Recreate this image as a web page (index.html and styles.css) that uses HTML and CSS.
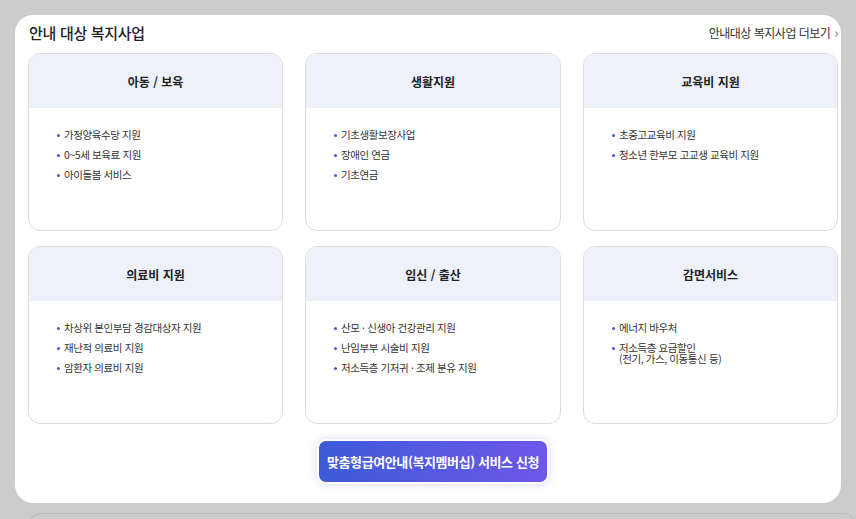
FILE: index.html
```html
<!DOCTYPE html>
<html lang="ko">
<head>
    <meta charset="UTF-8">
    <title>안내 대상 복지사업</title>
    <link rel="stylesheet" href="styles.css">
</head>
<body>

    <div class="panel">
        <div class="panel-head">
            <h2>안내 대상 복지사업</h2>
            <a class="more" href="#">안내대상 복지사업 더보기 <span class="chev">&#8250;</span></a>
        </div>

        <!-- 복지사업 카드 -->
        <div class="card-grid">
            <div class="card">
                <div class="card-title">아동 / 보육</div>
                <ul class="card-list">
                    <li>가정양육수당 지원</li>
                    <li>0~5세 보육료 지원</li>
                    <li>아이돌봄 서비스</li>
                </ul>
            </div>
            <div class="card">
                <div class="card-title">생활지원</div>
                <ul class="card-list">
                    <li>기초생활보장사업</li>
                    <li>장애인 연금</li>
                    <li>기초연금</li>
                </ul>
            </div>
            <div class="card">
                <div class="card-title">교육비 지원</div>
                <ul class="card-list">
                    <li>초중고교육비 지원</li>
                    <li>청소년 한부모 고교생 교육비 지원</li>
                </ul>
            </div>
            <div class="card">
                <div class="card-title">의료비 지원</div>
                <ul class="card-list">
                    <li>차상위 본인부담 경감대상자 지원</li>
                    <li>재난적 의료비 지원</li>
                    <li>암환자 의료비 지원</li>
                </ul>
            </div>
            <div class="card">
                <div class="card-title">임신 / 출산</div>
                <ul class="card-list">
                    <li>산모 · 신생아 건강관리 지원</li>
                    <li>난임부부 시술비 지원</li>
                    <li>저소득층 기저귀 · 조제 분유 지원</li>
                </ul>
            </div>
            <div class="card">
                <div class="card-title">감면서비스</div>
                <ul class="card-list">
                    <li>에너지 바우처</li>
                    <li>저소득층 요금할인<br>(전기, 가스, 이동통신 등)</li>
                </ul>
            </div>
        </div>

        <div class="btn-wrap">
            <button class="apply-btn">맞춤형급여안내(복지멤버십) 서비스 신청</button>
        </div>
    </div>

    <div class="panel-next"></div>

</body>
</html>
```

FILE: styles.css
```css
/* Page */
body {
    margin: 0;
    background-color: #cccccc;
    font-family: "Noto Sans CJK KR", "Noto Sans", sans-serif;
    color: #222;
    overflow: hidden;
}

/* White panel */
.panel {
    margin: 15px 0 0 15px;
    width: 826px;
    height: 488px;
    box-sizing: border-box;
    padding: 6px 3px 0 13px;
    background-color: #fff;
    border-radius: 18px;
}

.panel-head {
    display: flex;
    justify-content: space-between;
    align-items: center;
    height: 22px;
    margin-bottom: 10px;
}

.panel-head h2 {
    margin: 0 0 0 1px;
    font-size: 15px;
    font-weight: 500;
    letter-spacing: -0.3px;
    color: #222;
}

.more {
    font-size: 12px;
    color: #333;
    text-decoration: none;
    letter-spacing: -0.5px;
}

.more .chev {
    color: #777;
    font-size: 14px;
    margin-left: 1px;
}

/* Cards */
.card-grid {
    display: grid;
    grid-template-columns: 255px 256px 255px;
    column-gap: 22px;
    row-gap: 15px;
}

.card {
    height: 178px;
    box-sizing: border-box;
    border: 1px solid #dcdcdc;
    border-radius: 12px;
    overflow: hidden;
}

.card-title {
    height: 54px;
    display: flex;
    justify-content: center;
    align-items: center;
    background-color: #eef1fa;
    font-size: 12px;
    font-weight: 700;
    color: #222;
}

.card-list {
    list-style: none;
    margin: 0;
    padding: 21px 10px 0 35px;
}

.card-list li {
    position: relative;
    font-size: 10.5px;
    line-height: 11px;
    letter-spacing: -0.4px;
    color: #333;
    margin-bottom: 9px;
}

.card-list li::before {
    content: "";
    position: absolute;
    left: -7px;
    top: 5px;
    width: 3px;
    height: 3px;
    border-radius: 50%;
    background-color: #4a5bd0;
}

/* Apply button */
.btn-wrap {
    display: flex;
    justify-content: center;
    margin-top: 15px;
}

.apply-btn {
    width: 232px;
    height: 45px;
    border: 2px solid #fff;
    border-radius: 9px;
    background: linear-gradient(90deg, #3d5bd6, #6e57ea);
    box-shadow: 0 0 8px rgba(110, 100, 230, 0.25);
    color: #fff;
    font-family: "Noto Sans CJK KR", "Noto Sans", sans-serif;
    font-size: 13px;
    font-weight: 700;
    letter-spacing: -0.4px;
    cursor: pointer;
}

/* Next panel peeking below */
.panel-next {
    margin: 10px 0 0 29px;
    height: 40px;
    border: 1px solid #bbb;
    border-radius: 12px;
}
```
